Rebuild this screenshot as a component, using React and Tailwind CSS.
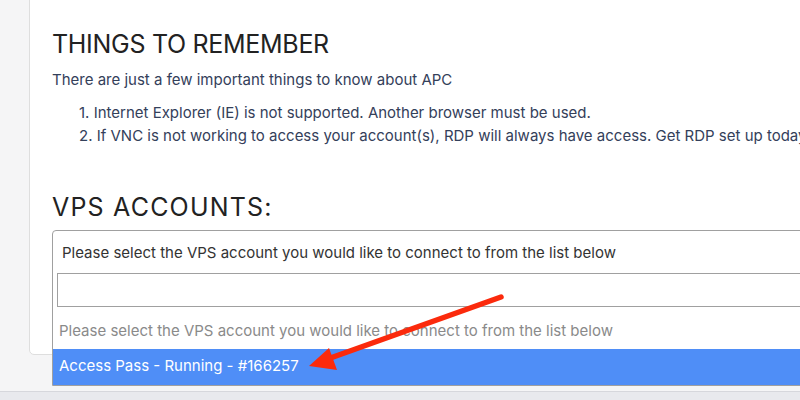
const App = () => {
    return (
        <div className="relative flex h-[400px] w-[800px] flex-col overflow-hidden bg-[#f5f5f6] font-['Inter',sans-serif]">
            <div className="flex h-[391px] shrink-0 flex-col">
                {/* Main card */}
                <div className="ml-[29px] mt-[-10px] h-[365px] w-[820px] shrink-0 rounded-bl-[5px] border border-[#dedede] bg-white pl-[22px] pt-[38px]">
                    <h2 className="text-[25px] leading-[30px] font-normal tracking-[-0.3px] text-[#222]">THINGS TO REMEMBER</h2>
                    <p className="mt-[11px] text-[15px] leading-[20px] text-[#34405a]">
                        There are just a few important things to know about APC
                    </p>
                    <ol className="mt-[13px] space-y-[3px] pl-[27px] text-[15px] leading-[20px] text-[#34405a]">
                        <li>1. Internet Explorer (IE) is not supported. Another browser must be used.</li>
                        <li className="whitespace-nowrap">
                            2. If VNC is not working to access your account(s), RDP will always have access. Get RDP set up today!
                        </li>
                    </ol>

                    <h2 className="mt-[46px] text-[25px] leading-[30px] font-normal tracking-[1.2px] text-[#222]">VPS ACCOUNTS:</h2>

                    {/* Select dropdown (open) */}
                    <div className="mt-[8px] w-[800px] rounded-tl-[4px] border border-[#a0a0a0] bg-white">
                        <div className="px-[9px] pt-[12px] pb-[10px] text-[15px] leading-[20px] text-[#333]">
                            Please select the VPS account you would like to connect to from the list below
                        </div>
                        <div className="px-[4px]">
                            <div className="h-[34px] border border-[#a0a0a0]" />
                        </div>
                        <div className="px-[6px] pt-[14px] pb-[8px] text-[15px] leading-[20px] text-[#8a8a8a]">
                            Please select the VPS account you would like to connect to from the list below
                        </div>
                        <div className="h-[36px] bg-[#4f8ef7] px-[6px] pt-[7px] text-[15px] leading-[20px] text-white">
                            Access Pass - Running - #166257
                        </div>
                    </div>
                </div>
            </div>

            {/* Bottom bar */}
            <div className="h-[9px] shrink-0 border-t border-[#d6d7dc] bg-[#e8e9ed]" />

            {/* Annotation arrow */}
            <svg className="pointer-events-none absolute left-0 top-0" width="800" height="400" viewBox="0 0 800 400">
                <line x1="501" y1="297" x2="322" y2="361" stroke="#fb2a0c" strokeWidth="5.5" strokeLinecap="round" />
                <polygon points="309,366 329,348 337,370" fill="#fb2a0c" />
            </svg>
        </div>
    );
};

export default App;
